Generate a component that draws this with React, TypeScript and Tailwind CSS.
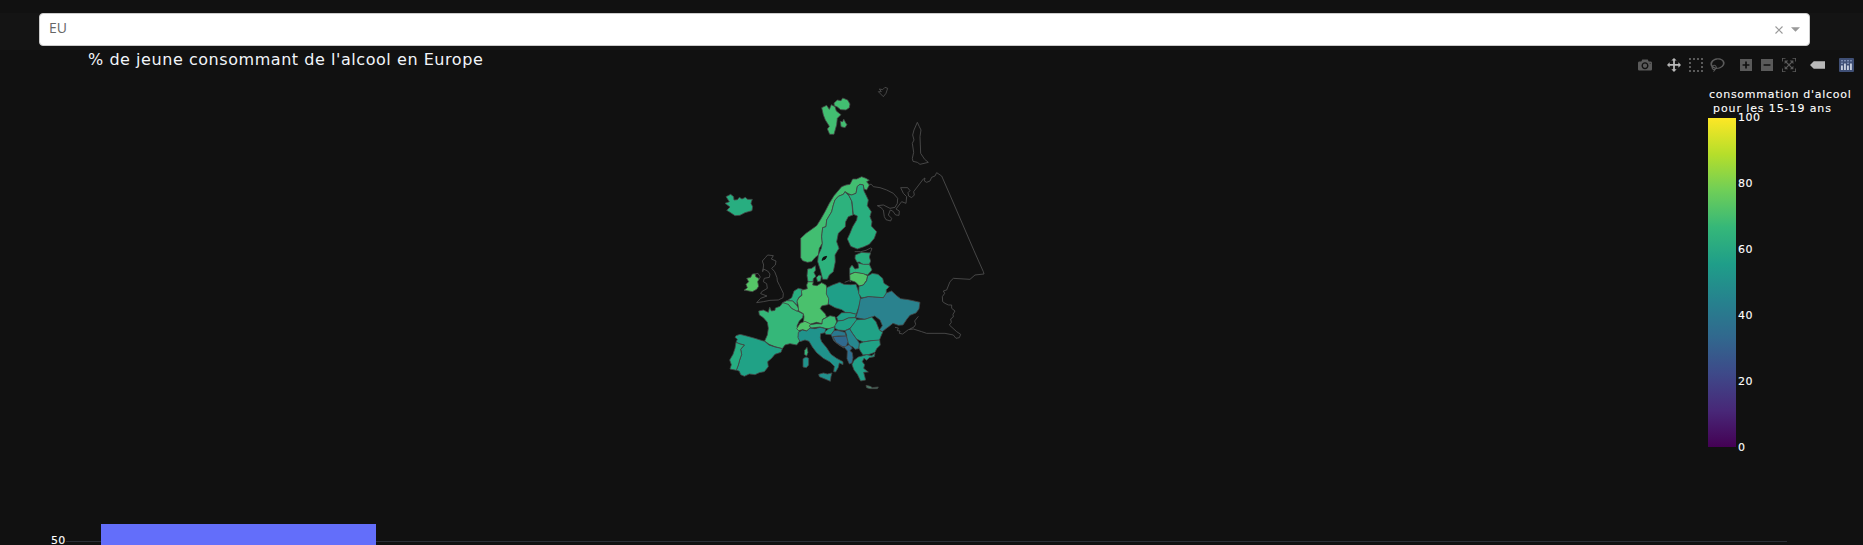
import React from "react";

type Shape = { d: string; fill: string };

const NORTH: Shape[] = [
  { fill: "#28ae80", d: "78,95 92,88 101,95 102,105 112,104 118,97 126,102 136,97 143,103 157,103 153,115 158,125 156,137 135,143 120,151 105,152 90,142 80,136 90,126 75,115 88,110" },
  { fill: "#42be71", d: "302,220 318,205 332,195 350,182 362,163 375,140 388,115 402,92 425,65 438,60 450,58 458,42 470,42 485,35 498,40 508,46 500,50 508,60 500,75 492,72 490,60 480,58 472,64 468,85 455,90 445,86 435,80 430,88 415,94 405,105 400,120 395,140 386,155 380,165 378,185 368,188 365,215 367,235 358,250 355,270 345,278 335,290 322,292 308,287 302,278" },
  { fill: "#2db27d", d: "430,88 435,80 447,92 455,108 459,150 445,155 437,170 436,185 415,205 410,230 417,250 405,270 406,290 400,320 388,330 382,343 368,343 361,315 353,290 355,270 364,250 367,235 365,215 368,188 378,185 380,165 395,140 400,120 405,105 415,94" },
  { fill: "#29af7f", d: "445,88 455,90 468,85 472,64 480,58 490,60 492,78 498,90 505,105 502,122 514,140 510,155 516,170 514,183 530,200 523,220 508,238 490,246 472,252 452,244 442,222 450,205 458,185 470,165 472,153 460,148 456,110" },
  { fill: "#29af7f", d: "466,270 485,262 512,264 508,276 512,288 508,298 490,299 478,291 471,292 465,280" },
  { fill: "#2db27d", d: "449,328 449,310 456,300 465,312 476,309 474,294 490,298 508,298 516,315 503,330 485,326 465,322" },
];

const SOUTH: Shape[] = [
  { fill: "#55c667", d: "97,27 105,26 107,35 118,41 113,50 116,64 110,73 97,80 82,77 72,76 82,68 78,58 86,50 80,40 92,37" },
  { fill: "#35b779", d: "116,138 130,135 145,142 149,126 154,138 165,136 166,129 180,124 188,113 195,110 205,118 215,130 232,138 250,147 248,158 238,168 231,183 233,190 238,200 235,215 240,227 230,240 210,236 195,240 187,251 165,245 147,238 134,228 142,210 145,190 142,172 130,158 118,150" },
  { fill: "#20a286", d: "48,212 60,208 80,213 105,220 134,229 147,240 165,246 187,251 183,262 165,268 155,280 143,290 145,305 133,320 118,323 105,329 88,327 73,334 62,329 58,319 49,315 55,300 59,285 65,268 62,253 73,240 60,237 48,232 52,223 45,217" },
  { fill: "#26ad81", d: "48,232 60,237 73,240 62,253 65,268 59,285 55,300 49,316 30,312 34,299 29,285 39,268 45,250" },
  { fill: "#28ae80", d: "200,108 215,98 222,78 235,70 248,73 245,90 236,98 232,108 231,121 218,108" },
  { fill: "#3bbb75", d: "188,113 200,107 218,108 230,121 237,132 232,139 215,130 205,118" },
  { fill: "#4ac16d", d: "264,50 280,50 278,60 291,62 305,53 318,60 322,73 321,85 328,101 324,119 305,123 301,131 316,147 320,157 308,163 306,176 290,172 272,177 250,173 252,155 250,146 236,138 234,120 231,108 237,98 246,91 244,76 262,71 260,60" },
  { fill: "#35b779", d: "264,50 261,32 263,12 275,10 286,2 287,15 282,23 288,34 280,41 279,50" },
  { fill: "#35b779", d: "289,38 297,30 304,33 302,48 293,50" },
  { fill: "#50c46a", d: "230,191 240,175 255,169 268,175 276,183 268,192 260,198 248,194 236,197" },
  { fill: "#3bbb75", d: "270,179 290,176 306,177 307,164 318,158 330,152 345,155 350,170 345,185 330,192 315,190 300,186 275,189 268,184" },
  { fill: "#20938c", d: "235,202 247,195 260,198 270,189 285,191 300,187 317,191 315,203 302,206 301,219 305,230 320,248 333,268 350,280 369,290 369,299 358,294 355,307 347,321 341,320 343,304 330,291 310,280 290,263 277,246 267,229 255,225 240,230 234,218" },
  { fill: "#21908c", d: "296,328 310,324 322,327 336,324 333,335 331,349 317,343 298,335" },
  { fill: "#20938c", d: "249,281 258,276 266,280 266,300 259,308 249,306" },
  { fill: "#35b779", d: "254,256 261,247 264,262 260,273 253,268" },
  { fill: "#20a386", d: "314,201 326,191 345,185 342,197 334,209 317,208" },
  { fill: "#1f9f88", d: "320,68 337,60 359,52 372,58 392,59 408,58 414,75 419,90 422,103 417,124 409,148 390,143 376,142 365,134 345,128 325,117 326,101 319,87" },
  { fill: "#50c46a", d: "389,29 405,22 430,26 443,32 440,46 430,60 418,63 406,51 390,46" },
  { fill: "#21a585", d: "443,33 457,25 474,28 488,40 492,55 508,65 499,74 499,87 490,98 470,97 445,95 425,99 416,86 417,64 430,60 440,47" },
  { fill: "#2a828e", d: "421,101 445,95 490,98 499,84 515,78 530,92 542,101 565,104 583,108 600,112 597,132 588,144 570,151 561,162 549,180 535,181 519,175 509,183 498,191 487,200 478,195 487,182 480,165 464,153 450,158 435,163 407,158 413,140 417,124" },
  { fill: "#20a087", d: "350,157 365,143 390,143 409,148 405,158 385,159 370,166 354,168" },
  { fill: "#20a286", d: "345,181 354,168 370,166 385,159 407,158 411,166 390,190 375,197 355,195 345,190" },
  { fill: "#20a286", d: "410,164 435,163 455,156 468,170 478,195 488,202 482,216 477,229 455,227 430,231 410,223 398,206 389,192" },
  { fill: "#20a386", d: "417,236 430,231 455,227 479,225 481,240 470,251 465,262 445,269 429,270 421,258 416,248" },
  { fill: "#26878e", d: "375,197 389,192 398,206 410,223 418,234 416,251 405,253 399,246 389,242 380,225 380,210" },
  { fill: "#2a788e", d: "333,209 342,197 352,196 375,202 379,214 355,213 339,215 348,232 372,249 358,241 341,227 335,213" },
  { fill: "#30698e", d: "339,215 379,213 384,230 378,247 366,244 348,232" },
  { fill: "#2e6f8e", d: "372,246 387,239 397,249 390,257 397,263 399,278 396,294 388,297 381,281 382,258" },
  { fill: "#20a087", d: "396,299 402,286 415,276 440,269 455,272 465,265 463,275 448,278 440,286 432,280 427,290 434,299 431,310 445,321 431,322 437,345 422,348 412,328 402,315" },
  { fill: "#49806b", d: "438,361 451,364 457,368 475,366 472,371 450,371 440,368" },
];

const SVALBARD: Shape[] = [
  { fill: "#42be71", d: "365,98 380,91 388,103 394,89 405,95 409,108 423,119 412,130 410,149 402,178 389,178 382,162 388,154 376,135 370,120" },
  { fill: "#42be71", d: "402,84 412,75 423,77 428,69 443,75 450,87 448,98 438,105 422,104 412,96 403,92" },
  { fill: "#42be71", d: "421,139 428,140 431,132 437,143 441,149 435,158 423,155" },
];

const EAST = [
  "M115,50 122,57 130,65 138,55 143,40 135,37 128,44 118,42 124,50Z",
  "M232,142 238,155 243,165 240,185 241,210 242,235 254,253 265,262 240,268 232,262 219,259 217,250 221,232 217,205 222,195 218,180 222,165Z",
  "M88,328 94,328 100,335 120,338 140,345 160,355 173,370 172,385 165,397 150,400 130,390 112,392 123,398 130,405 133,425 138,434 152,438 155,430 145,420 151,405 158,408 167,420 177,421 178,408 168,402 185,380 198,385 200,365 190,355 182,338 203,338 210,347 204,353 206,363 215,368 223,360 221,350 250,312 255,309 253,318 260,322 270,318 275,307 285,303 290,293 305,303 330,360 402,527 430,590 432,597 405,600 390,613 340,610 330,620 320,645 310,648 314,655 307,665 308,680 315,685 325,690 335,690 335,700 345,708 339,718 340,726 332,732 334,742 328,750 350,770 362,778 358,788 348,790 340,780 315,775 285,775 260,775 245,770 220,762 205,764 188,777 178,775 180,768 172,767 175,759 165,757",
  "M208,763 222,756 227,748 224,738 235,724",
  "M44,530 62,530 78,526 92,519 96,521 92,530 88,535",
  "M14,622 27,617 33,620",
];

const UK = [
  "M128,20 131,0 127,-12 136,-22 143,-30 160,-28 154,-18 168,-12 166,0 155,10 164,20 171,38 172,48 179,62 190,85 189,98 175,105 150,106 130,110 110,113 122,100 141,93 122,86 125,80 142,70 140,56 130,50 133,40 148,37 150,27 143,18 130,12Z",
  "M105,27 114,25 121,36 116,44 107,36Z",
];

function Shapes({ items }: { items: Shape[] }) {
  return (
    <>
      {items.map((s) => (
        <polygon key={s.d} points={s.d} fill={s.fill} stroke="#444" strokeWidth={2.4} strokeLinejoin="round" />
      ))}
    </>
  );
}

function EuropeMap() {
  return (
    <svg className="ml-[700px] block h-[325px] w-[300px] shrink-0" viewBox="700 75 300 325">
      <g transform="translate(840 75) scale(.33333)" fill="none" stroke="#505050" strokeWidth={2.5}>
        {EAST.map((d) => <path key={d} d={d} />)}
      </g>
      <g transform="translate(720 265) scale(.33333)" fill="none" stroke="#505050" strokeWidth={2.5}>
        {UK.map((d) => <path key={d} d={d} />)}
      </g>
      <g transform="translate(700 75) scale(.33333)"><Shapes items={SVALBARD} /></g>
      <g transform="translate(700 165) scale(.33333)">
        <Shapes items={NORTH} />
        <path d="M366,286 370,277 380,274 376,282Z" fill="#111" stroke="#111" strokeWidth={3} />
      </g>
      <g transform="translate(720 265) scale(.33333)"><Shapes items={SOUTH} /></g>
    </svg>
  );
}

const ICONS = {
  camera: "m500 450c-83 0-150-67-150-150 0-83 67-150 150-150 83 0 150 67 150 150 0 83-67 150-150 150z m400 150h-120c-16 0-34 13-39 29l-31 93c-6 15-23 28-40 28h-340c-16 0-34-13-39-28l-31-94c-6-15-23-28-40-28h-120c-55 0-100-45-100-100v-450c0-55 45-100 100-100h800c55 0 100 45 100 100v450c0 55-45 100-100 100z m-400-550c-138 0-250 112-250 250 0 138 112 250 250 250 138 0 250-112 250-250 0-138-112-250-250-250z m365 380c-19 0-35 16-35 35 0 19 16 35 35 35 19 0 35-16 35-35 0-19-16-35-35-35z",
  pan: "m1000 350l-187 188 0-125-250 0 0 250 125 0-188 187-187-187 125 0 0-250-250 0 0 125-188-188 186-187 0 125 252 0 0-250-125 0 187-188 188 188-125 0 0 250 250 0 0-126 187 188z",
  box: "m0 850l0-143 143 0 0 143-143 0z m286 0l0-143 143 0 0 143-143 0z m285 0l0-143 143 0 0 143-143 0z m286 0l0-143 143 0 0 143-143 0z m-857-286l0-143 143 0 0 143-143 0z m857 0l0-143 143 0 0 143-143 0z m-857-285l0-143 143 0 0 143-143 0z m857 0l0-143 143 0 0 143-143 0z m-857-286l0-143 143 0 0 143-143 0z m286 0l0-143 143 0 0 143-143 0z m285 0l0-143 143 0 0 143-143 0z m286 0l0-143 143 0 0 143-143 0z",
  lasso: "m1018 538c-36 207-290 336-568 286-277-48-473-256-436-463 10-57 36-108 76-151-13-66 11-137 68-183 34-28 75-41 114-42l-55-70 0 0c-2-1-3-2-4-3-10-14-8-34 5-45 14-11 34-8 45 4 1 1 2 3 2 5l0 0 113 140c16 11 31 24 45 40 4 3 6 7 8 11 48-3 100 0 151 9 278 48 473 255 436 462z m-624-379c-80 14-149 48-197 96 42 42 109 47 156 9 33-26 47-66 41-105z m-187-74c-19 16-33 37-39 60 50-32 109-55 174-68-42-25-95-24-135 8z m360 75c-34-7-69-9-102-8 8 62-16 128-68 170-73 59-175 54-244-5-9 20-16 40-20 61-28 159 121 317 333 354s407-60 434-217c28-159-121-318-333-355z",
  plus: "m1 787l0-875 875 0 0 875-875 0z m687-500l-187 0 0-187-125 0 0 187-188 0 0 125 188 0 0 187 125 0 0-187 187 0 0-125z",
  minus: "m0 788l0-876 875 0 0 876-875 0z m688-500l-500 0 0 125 500 0 0-125z",
  reset: "m250 850l-187 0-63 0 0-62 0-188 63 0 0 188 187 0 0 62z m688 0l-188 0 0-62 188 0 0-188 62 0 0 188 0 62-62 0z m-875-938l0 188-63 0 0-188 0-62 63 0 187 0 0 62-187 0z m875 188l0-188-188 0 0-62 188 0 62 0 0 62 0 188-62 0z m-125 188l-1 0-93-94-156 156 156 156 92-93 2 0 0 250-250 0 0-2 93-92-156-156-156 156 94 92 0 2-250 0 0-250 0 0 93 93 157-156-157-156-93 94 0 0 0-250 250 0 0 0-94 93 156 157 156-157-93-93 0 0 250 0 0 250z",
  tag: "m375 725l0 0-375-375 375-374 0-1 1125 0 0 750-1125 0z",
};

function Icon({ d, w = 1000, className }: { d: string; w?: number; className: string }) {
  return (
    <svg viewBox={`0 0 ${w} 1000`} className={`h-[14px] shrink-0 fill-current ${className}`}>
      <path d={d} transform="matrix(1 0 0 -1 0 850)" />
    </svg>
  );
}

function ModeBar() {
  return (
    <div className="flex h-[14px] w-[225px] items-center text-[#5a5a5a]">
      <Icon d={ICONS.camera} className="w-[14px]" />
      <Icon d={ICONS.pan} className="ml-[15px] w-[14px] text-[#b8b8b8]" />
      <Icon d={ICONS.box} className="ml-[8px] w-[14px]" />
      <Icon d={ICONS.lasso} w={1031} className="ml-[7px] w-[15px]" />
      <Icon d={ICONS.plus} w={875} className="ml-[15px] w-[12px]" />
      <Icon d={ICONS.minus} w={875} className="ml-[9px] w-[12px]" />
      <Icon d={ICONS.reset} className="ml-[9px] w-[14px]" />
      <Icon d={ICONS.tag} w={1500} className="ml-[14px] w-[15px] text-[#b8b8b8]" />
      <svg viewBox="0 0 15 14" className="ml-[14px] h-[14px] w-[15px] shrink-0">
        <rect width="15" height="14" rx="1" fill="#3f4f75" />
        <g fill="#e6ebf5">
          <rect x="2.2" y="7.5" width="1.5" height="4.5" />
          <rect x="5.2" y="5.5" width="1.5" height="6.5" />
          <rect x="8.2" y="7.5" width="1.5" height="4.5" />
          <rect x="11.2" y="5.5" width="1.5" height="6.5" />
        </g>
        <g fill="#9fb0d6">
          <circle cx="3" cy="5.2" r=".8" /><circle cx="3" cy="2.8" r=".8" /><circle cx="6" cy="2.8" r=".8" />
          <circle cx="9" cy="5.2" r=".8" /><circle cx="9" cy="2.8" r=".8" /><circle cx="12" cy="2.8" r=".8" />
        </g>
      </svg>
    </div>
  );
}

function ColorScale() {
  return (
    <div className="ml-[708px] mt-[13px] w-[150px] shrink-0 text-[11px] text-white [-webkit-text-stroke:0.1px_#fff]">
      <div className="whitespace-pre pl-px leading-[14px] tracking-[0.72px]">
        <div>consommation d'alcool</div>
        <div className="pl-[4px] tracking-[0.9px]">pour les 15-19 ans</div>
      </div>
      <div className="mt-[2px] flex">
        <div className="h-[329px] w-[28px] bg-[linear-gradient(to_top,#440154_0%,#482878_11.1%,#3e4989_22.2%,#31688e_33.3%,#26828e_44.4%,#1f9e89_55.6%,#35b779_66.7%,#6ece58_77.8%,#b5de2b_88.9%,#fde725_100%)]" />
        <div className="-mt-[7px] ml-[2px] flex h-[344px] flex-col justify-between leading-[14px] tracking-[0.5px]">
          {[100, 80, 60, 40, 20, 0].map((n) => <span key={n}>{n}</span>)}
        </div>
      </div>
    </div>
  );
}

export default function App() {
  return (
    <main className="flex h-[545px] w-[1863px] flex-col overflow-hidden bg-[#111] font-['DejaVu_Sans',Verdana,sans-serif]">
      <header className="mt-[13px] h-[37px] shrink-0 bg-[#141414] pl-[39px]">
        <div className="flex h-[33px] w-[1771px] items-center rounded-[4px] border border-[#ccc] bg-white pr-[9px] pl-[9px]">
          <span className="grow pb-[3px] font-['Open_Sans',sans-serif] text-[14px] font-normal leading-[20px] text-[#666]">EU</span>
          <svg viewBox="0 0 8 8" className="h-[8px] w-[8px]"><path d="M.5.5l7 7M7.5.5l-7 7" stroke="#999" strokeWidth="1.1" /></svg>
          <svg viewBox="0 0 10 5" className="ml-[8px] h-[5px] w-[9px]"><path d="M0 0h10L5 5z" fill="#999" /></svg>
        </div>
      </header>
      <div className="flex h-[25px] shrink-0 items-start pl-[88px]">
        <h1 className="w-[1550px] whitespace-nowrap text-[16px] font-normal leading-[20px] tracking-[0.55px] text-[#f2f5fa]">
          % de jeune consommant de l'alcool en Europe
        </h1>
        <div className="pt-[8px]"><ModeBar /></div>
      </div>
      <section className="flex h-[449px] shrink-0 items-start">
        <EuropeMap />
        <ColorScale />
      </section>
      <section className="flex h-[21px] shrink-0 items-start pl-[51px]">
        <div className="mt-[11px] h-[10px] w-[15px] text-[11px] leading-[12px] tracking-[0.2px] text-white [-webkit-text-stroke:0.1px_#fff]">50</div>
        <div className="mt-[17px] h-px w-[35px] bg-[#2c2e36]" />
        <div className="h-[21px] w-[275px] bg-[#636efa]" />
        <div className="mt-[17px] h-px w-[1411px] bg-[#2c2e36]" />
      </section>
    </main>
  );
}
